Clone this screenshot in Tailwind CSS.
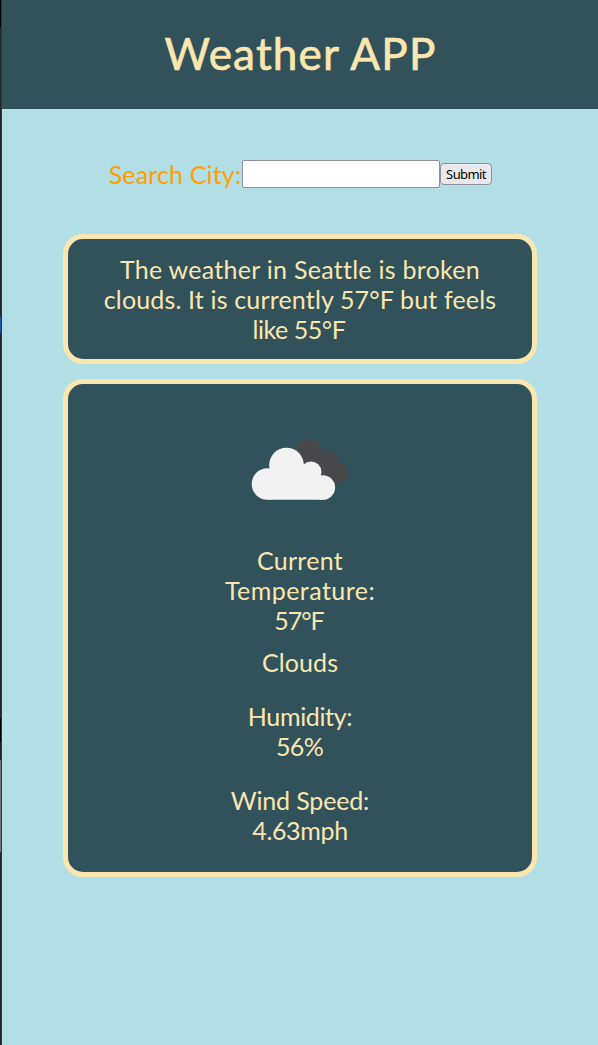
<!DOCTYPE html>
<html lang="en">
<head>
<meta charset="utf-8">
<title>Weather APP</title>
<script src="https://cdn.jsdelivr.net/npm/@tailwindcss/browser@4"></script>
</head>
<body class="flex h-[1045px] overflow-hidden bg-[#b2dee5] font-['Lato',sans-serif] text-[25px] leading-[30px] text-[#fbe6b0]">
<aside class="flex w-[2px] shrink-0 flex-col border-r border-[#34343c] bg-[#25232b]">
  <div class="h-[27px] bg-black"></div>
  <div class="mt-[290px] h-4 bg-[#1756a8]"></div>
  <div class="mt-[385px] h-6 bg-black"></div>
  <div class="mt-[18px] h-[92px] bg-[#77777a]"></div>
</aside>
<div class="flex grow flex-col items-center">
  <header class="flex h-[109px] w-full justify-center bg-[#31525b] pt-[26px]">
    <h1 class="pl-px text-[44px] leading-[54px] tracking-[1.2px] [-webkit-text-stroke:0.7px_#fbe6b0]">Weather APP</h1>
  </header>
  <form class="mt-[51px] flex h-7 items-center">
    <label class="w-[134px] text-center tracking-[0.15px] whitespace-nowrap text-[#ffa000]">Search City:</label>
    <input class="h-7 w-[198px] rounded-[2px] border border-[#8f8f9d] bg-white">
    <button type="button" class="h-[22px] w-[52px] rounded-[4px] border border-[#8f8f9d] bg-[#e9e9ed] pt-px font-['Noto_Sans',sans-serif] text-[13px] leading-[19px] tracking-[-0.6px] text-black">Submit</button>
  </form>
  <section class="mt-[46px] flex h-[130px] w-[474px] flex-col items-center rounded-[20px] border-[5px] border-[#fbe6b0] bg-[#31525b] pt-[15px] whitespace-nowrap">
    <span class="tracking-[0.27px]">The weather in Seattle is broken</span>
    <span class="tracking-[0.16px]">clouds. It is currently 57°F but feels</span>
    <span class="pr-0.5 tracking-[-0.45px]">like 55°F</span>
  </section>
  <section class="mt-[15px] flex h-[498px] w-[474px] flex-col items-center rounded-[20px] border-[5px] border-[#fbe6b0] bg-[#31525b] pt-[46px] whitespace-nowrap">
    <svg class="h-20 w-[120px]" viewBox="0 0 120 80">
      <g fill="#48484a">
        <circle cx="68" cy="24" r="14.5"/>
        <circle cx="89" cy="31" r="9.500"/>
        <circle cx="98" cy="43" r="10.500"/>
        <path d="M60 30h30l8 23.500H65z"/>
      </g>
      <g fill="#f2f2f2">
        <circle cx="27.500" cy="54" r="15.800"/>
        <circle cx="46.500" cy="35" r="17.300"/>
        <circle cx="71" cy="42" r="10.500"/>
        <circle cx="82.800" cy="57.500" r="12.300"/>
        <path d="M27 45l20-10h18l15 10 3 24.800H27.500z"/>
      </g>
    </svg>
    <span class="mt-[35px] tracking-[0.25px]">Current</span>
    <span class="tracking-[0.45px]">Temperature:</span>
    <span class="pr-0.5 tracking-[-1px]">57°F</span>
    <span class="mt-3 tracking-[0.1px]">Clouds</span>
    <span class="mt-6 tracking-[-0.35px]">Humidity:</span>
    <span class="pr-px tracking-[-0.6px]">56%</span>
    <span class="mt-6 tracking-[-0.15px]">Wind Speed:</span>
    <span class="tracking-[-0.35px]">4.63mph</span>
  </section>
</div>
</body>
</html>
